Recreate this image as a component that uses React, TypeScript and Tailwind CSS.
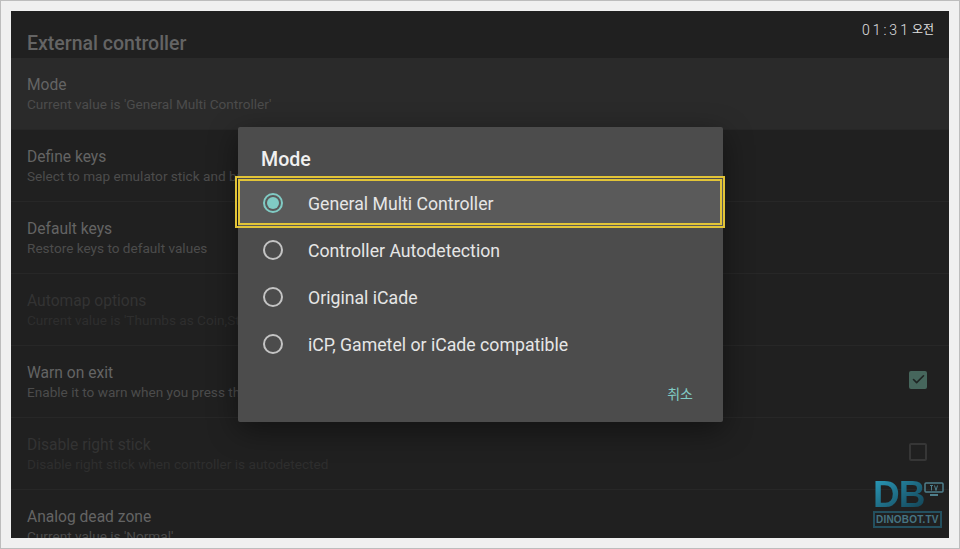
import { Check } from 'lucide-react'

const font = { fontFamily: 'Roboto, "Noto Sans CJK KR", sans-serif' }

interface Row {
  title: string
  summary: string
  titleClass: string
  summaryClass: string
  checkbox?: 'on' | 'off'
  active?: boolean
}

const rows: Row[] = [
  {
    title: 'Mode',
    summary: "Current value is 'General Multi Controller'",
    titleClass: 'text-[#646464]',
    summaryClass: 'text-[#4c4c4c]',
    active: true,
  },
  {
    title: 'Define keys',
    summary: 'Select to map emulator stick and buttons',
    titleClass: 'text-[#646464]',
    summaryClass: 'text-[#4c4c4c]',
  },
  {
    title: 'Default keys',
    summary: 'Restore keys to default values',
    titleClass: 'text-[#646464]',
    summaryClass: 'text-[#4c4c4c]',
  },
  {
    title: 'Automap options',
    summary: "Current value is 'Thumbs as Coin,Start'",
    titleClass: 'text-[#333333]',
    summaryClass: 'text-[#2e2e2e]',
  },
  {
    title: 'Warn on exit',
    summary: 'Enable it to warn when you press the exit button',
    titleClass: 'text-[#646464]',
    summaryClass: 'text-[#4c4c4c]',
    checkbox: 'on',
  },
  {
    title: 'Disable right stick',
    summary: 'Disable right stick when controller is autodetected',
    titleClass: 'text-[#333333]',
    summaryClass: 'text-[#2e2e2e]',
    checkbox: 'off',
  },
  {
    title: 'Analog dead zone',
    summary: "Current value is 'Normal'",
    titleClass: 'text-[#646464]',
    summaryClass: 'text-[#4c4c4c]',
  },
]

const options = [
  'General Multi Controller',
  'Controller Autodetection',
  'Original iCade',
  'iCP, Gametel or iCade compatible',
]

function SettingRow({ row }: { row: Row }) {
  return (
    <div
      className={`flex h-[72px] shrink-0 items-center justify-between border-b border-[#272727] pl-[16px] pr-[22px] ${
        row.active ? 'bg-[#2a2a2a]' : ''
      }`}
    >
      <div className="pt-[2px]">
        <div className={`text-[15.6px] leading-[20px] ${row.titleClass}`}>{row.title}</div>
        <div className={`text-[13.6px] leading-[19px] ${row.summaryClass}`}>{row.summary}</div>
      </div>
      {row.checkbox === 'on' && (
        <div className="mb-[4px] flex h-[18px] w-[18px] items-center justify-center rounded-[2px] bg-[#46665c]">
          <Check size={15} strokeWidth={2.6} className="text-[#1f2523]" />
        </div>
      )}
      {row.checkbox === 'off' && (
        <div className="mb-[4px] h-[18px] w-[18px] rounded-[2px] border-2 border-[#363636]" />
      )}
    </div>
  )
}

function Radio({ selected }: { selected: boolean }) {
  return (
    <div
      className={`flex h-[20px] w-[20px] shrink-0 items-center justify-center rounded-full border-2 ${
        selected ? 'border-[#80cbc4]' : 'border-[#c4c4c4]'
      }`}
    >
      {selected && <div className="h-[12px] w-[12px] rounded-full bg-[#80cbc4]" />}
    </div>
  )
}

function Dialog() {
  return (
    <div className="absolute left-[237px] top-[126px] h-[295px] w-[485px] rounded-[2px] bg-[#4c4c4c] shadow-[0_8px_30px_rgba(0,0,0,0.45)]">
      <div className="pl-[23px] pt-[21px] text-[19.6px] font-medium leading-[24px] text-[#f0f0f0]">
        Mode
      </div>
      <div className="mt-[7px] flex flex-col">
        {options.map((option, i) => (
          <div
            key={option}
            className={`flex h-[47px] items-center pl-[25px] ${
              i === 0 ? 'relative bg-[#5a5a5a]' : ''
            }`}
          >
            {i === 0 && (
              <div className="absolute -left-[3px] -right-[2px] -top-[3px] -bottom-[2px] border-[5px] border-double border-[#e2c437]" />
            )}
            <Radio selected={i === 0} />
            <span className="ml-[25px] pt-[2px] text-[17.7px] leading-[20px] text-[#e6e6e6]">
              {option}
            </span>
          </div>
        ))}
      </div>
      <div className="mt-[17px] pr-[30px] text-right text-[14px] leading-[20px] text-[#80cbc4]">
        취소
      </div>
    </div>
  )
}

function Watermark() {
  return (
    <div className="absolute left-[872px] top-[477px] flex w-[72px] flex-col items-start">
      <div className="flex items-start">
        <span
          className="bg-gradient-to-br from-[#2a9cbc] to-[#123f50] bg-clip-text text-[37px] font-black leading-[34px] tracking-[-1px] text-transparent"
          style={{ fontFamily: '"Liberation Sans", sans-serif' }}
        >
          DB
        </span>
        <svg width="20" height="15" viewBox="0 0 20 15" className="mt-[4px]" fill="none">
          <rect x="1" y="1" width="18" height="9" rx="1" stroke="#4f7f8c" strokeWidth="1.5" />
          <path d="M6 13h8" stroke="#4f7f8c" strokeWidth="2" />
          <path d="M6 3.5h3M7.5 3.5v5M10.5 3.5l1.5 5 1.5-5" stroke="#4f7f8c" strokeWidth="1" />
        </svg>
      </div>
      <div
        className="mt-[-1px] whitespace-nowrap border-2 border-[#24505f] px-[1px] text-[10px] font-bold leading-[13px] tracking-[0.2px] text-[#467482]"
        style={{ fontFamily: '"Liberation Sans", sans-serif' }}
      >
        DINOBOT.TV
      </div>
    </div>
  )
}

export default function App() {
  return (
    <div
      className="relative h-[549px] w-[960px] overflow-hidden border border-[#bdbdbd] bg-[#f0f0f0] p-[10px]"
      style={font}
    >
      <div className="flex h-[527px] w-[938px] flex-col overflow-hidden bg-[#202020]">
        <div className="flex h-[47px] shrink-0 items-start justify-between pl-[16px] pr-[15px]">
          <div className="pt-[21px] text-[19.5px] font-medium leading-[24px] text-[#646464]">
            External controller
          </div>
          <div className="flex items-center pt-[10px] text-[#e0e0e0]">
            <span className="text-[14px] font-light leading-[18px] tracking-[3px]">01:31</span>
            <span className="ml-[1px] text-[12px] leading-[18px]">오전</span>
          </div>
        </div>
        {rows.map((row) => (
          <SettingRow key={row.title} row={row} />
        ))}
      </div>
      <Dialog />
      <Watermark />
    </div>
  )
}
